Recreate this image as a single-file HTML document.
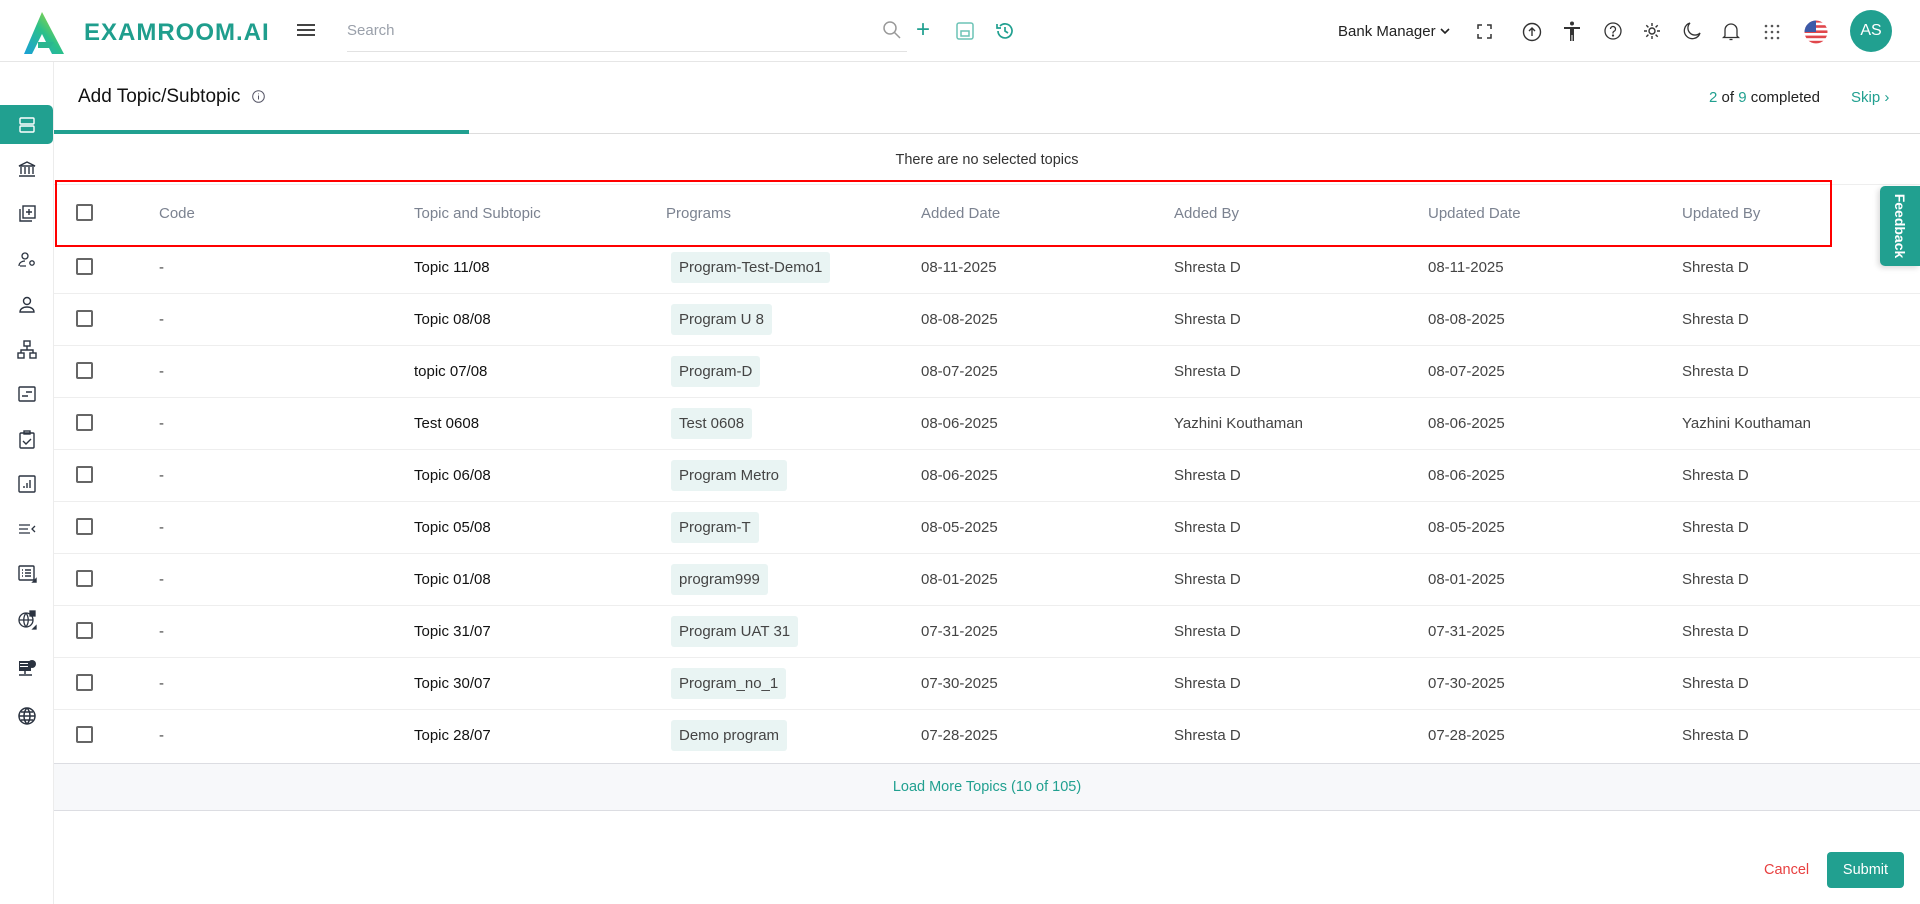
<!DOCTYPE html>
<html><head><meta charset="utf-8"><style>
*{box-sizing:border-box;margin:0;padding:0}
body{width:1920px;height:904px;overflow:hidden;background:#fff;font-family:"Liberation Sans",sans-serif;color:#222;position:relative}
.abs{position:absolute}
.hdr{position:absolute;left:0;top:0;width:1920px;height:62px;border-bottom:1px solid #e6e6e6;background:#fff}
.side{position:absolute;left:0;top:62px;width:54px;height:842px;border-right:1px solid #ececec}
.ic{position:absolute;left:17px;width:20px;height:20px}
.th{position:absolute;font-size:15px;color:#7b8290}
.td{position:absolute;font-size:15px;color:#444}
.cb{position:absolute;left:76px;width:17px;height:17px;border:2px solid #666;border-radius:2px}
.pill{position:absolute;left:671px;height:31px;padding:0 8px;line-height:31px;background:#e9f4f3;border-radius:3px;font-size:15px;color:#444}
.rowline{position:absolute;left:54px;width:1866px;height:1px;background:#eee}
</style></head><body>
<div class="hdr">
 <svg class="abs" style="left:24px;top:12px" width="40" height="42" viewBox="0 0 40 42"><defs><linearGradient id="g" x1="0" y1="1" x2="1" y2="0"><stop offset="0" stop-color="#1aa0d8"/><stop offset=".5" stop-color="#2bc08a"/><stop offset="1" stop-color="#c8e020"/></linearGradient></defs><path d="M18 0 L40 42 H28 L18 22 L8 42 H0 Z" fill="url(#g)"/><path d="M14 30 H30 L26 36 H14Z" fill="#2ab68f"/></svg>
 <div class="abs" style="left:84px;top:19px;font-size:24px;font-weight:bold;color:#1f9e8d;letter-spacing:1px">EXAMROOM.AI</div>
 <div class="abs" style="left:297px;top:24px;width:18px;height:2px;background:#444;box-shadow:0 5px 0 #444,0 10px 0 #444"></div>
 <div class="abs" style="left:347px;top:22px;font-size:15px;color:#9aa0aa">Search</div>
 <div class="abs" style="left:347px;top:51px;width:560px;height:1px;background:#e2e2e2"></div>
 <svg class="abs" style="left:882px;top:20px" width="20" height="20" viewBox="0 0 20 20" fill="none" stroke="#999" stroke-width="1.5"><circle cx="8" cy="8" r="6"/><path d="M12.5 12.5 18 18"/></svg>
 <div class="abs" style="left:916px;top:16px;font-size:24px;color:#21a090">+</div>
 <svg class="abs" style="left:956px;top:22px" width="18" height="18" viewBox="0 0 18 18" fill="none" stroke="#6cc3b6" stroke-width="1.5"><rect x="1" y="1" width="16" height="16" rx="2"/><rect x="5" y="9" width="8" height="5"/></svg>
 <svg class="abs" style="left:995px;top:21px" width="20" height="20" viewBox="0 0 20 20" fill="none" stroke="#21a090" stroke-width="1.7"><path d="M3 10a7 7 0 1 0 2-5"/><path d="M2 3v4h4"/><path d="M10 6v4l3 2"/></svg>
 <div class="abs" style="left:1338px;top:23px;font-size:15px;color:#222">Bank Manager</div>
 <svg class="abs" style="left:1440px;top:27px" width="10" height="8" viewBox="0 0 10 8" fill="none" stroke="#222" stroke-width="1.6"><path d="M1 2l4 4 4-4"/></svg>
 <svg class="abs" style="left:1477px;top:24px" width="15" height="15" viewBox="0 0 15 15" fill="none" stroke="#333" stroke-width="1.5"><path d="M1 5V1h4M10 1h4v4M14 10v4h-4M5 14H1v-4"/></svg>
 <svg class="abs" style="left:1522px;top:22px" width="20" height="20" viewBox="0 0 20 20" fill="none" stroke="#333" stroke-width="1.4"><circle cx="10" cy="10" r="8.5"/><path d="M10 14V6M7 9l3-3 3 3"/></svg>
 <svg class="abs" style="left:1563px;top:21px" width="18" height="20" viewBox="0 0 18 20" fill="#333"><circle cx="9" cy="2.5" r="2"/><path d="M1 6h16v2h-6v12h-1.5v-6h-1v6H7V8H1z"/></svg>
 <svg class="abs" style="left:1604px;top:22px" width="18" height="18" viewBox="0 0 18 18" fill="none" stroke="#333" stroke-width="1.3"><circle cx="9" cy="9" r="8"/><path d="M6.5 7a2.5 2.5 0 1 1 3.5 2.3c-.7.3-1 .8-1 1.5v.7"/><circle cx="9" cy="13.5" r=".5" fill="#333"/></svg>
 <svg class="abs" style="left:1643px;top:22px" width="18" height="18" viewBox="0 0 18 18" fill="none" stroke="#333" stroke-width="1.4"><circle cx="9" cy="9" r="3"/><path d="M9 1v3M9 14v3M1 9h3M14 9h3M3.3 3.3l2.1 2.1M12.6 12.6l2.1 2.1M3.3 14.7l2.1-2.1M12.6 5.4l2.1-2.1"/></svg>
 <svg class="abs" style="left:1683px;top:22px" width="18" height="18" viewBox="0 0 18 18" fill="none" stroke="#333" stroke-width="1.3"><path d="M7 1a8 8 0 1 0 10 10A7 7 0 0 1 7 1z"/></svg>
 <svg class="abs" style="left:1722px;top:21px" width="18" height="20" viewBox="0 0 18 20" fill="none" stroke="#333" stroke-width="1.3"><path d="M3 15V9a6 6 0 0 1 12 0v6l1.5 1.5h-15z"/><path d="M7.5 18.5h3"/></svg>
 <svg class="abs" style="left:1764px;top:24px" width="16" height="16" viewBox="0 0 16 16" fill="#555"><circle cx="2" cy="2" r="1.3"/><circle cx="8" cy="2" r="1.3"/><circle cx="14" cy="2" r="1.3"/><circle cx="2" cy="8" r="1.3"/><circle cx="8" cy="8" r="1.3"/><circle cx="14" cy="8" r="1.3"/><circle cx="2" cy="14" r="1.3"/><circle cx="8" cy="14" r="1.3"/><circle cx="14" cy="14" r="1.3"/></svg>
 <svg class="abs" style="left:1804px;top:20px" width="24" height="24" viewBox="0 0 24 24"><defs><clipPath id="c"><circle cx="12" cy="12" r="11.5"/></clipPath></defs><g clip-path="url(#c)"><rect width="24" height="24" fill="#fff"/><g fill="#e0474c"><rect y="0" width="24" height="2.6"/><rect y="5.2" width="24" height="2.6"/><rect y="10.4" width="24" height="2.6"/><rect y="15.6" width="24" height="2.6"/><rect y="20.8" width="24" height="2.6"/></g><rect width="12" height="12" fill="#3d5aa8"/></g></svg>
 <div class="abs" style="left:1850px;top:10px;width:42px;height:42px;border-radius:50%;background:#21a090;color:#fff;font-size:16px;line-height:42px;text-align:center">AS</div>
</div>

<div class="side">
 <div class="abs" style="left:0;top:43px;width:53px;height:39px;background:#21a090;border-radius:0 5px 5px 0"></div>
 <svg class="ic" style="top:53px" viewBox="0 0 20 20" fill="none" stroke="#fff" stroke-width="1.4"><rect x="3" y="3" width="14" height="6" rx="1"/><rect x="3" y="11" width="14" height="6" rx="1"/></svg>
 <svg class="ic" style="top:97px" viewBox="0 0 20 20" fill="none" stroke="#2b3340" stroke-width="1.4"><path d="M2 7l8-4 8 4zM4 8v7M8 8v7M12 8v7M16 8v7M2 17h16"/></svg>
 <svg class="ic" style="top:142px" viewBox="0 0 20 20" fill="none" stroke="#2b3340" stroke-width="1.4"><rect x="6" y="2" width="12" height="12"/><path d="M3 5v12h12M12 5v6M9 8h6"/></svg>
 <svg class="ic" style="top:188px" viewBox="0 0 20 20" fill="none" stroke="#2b3340" stroke-width="1.3"><circle cx="8" cy="6" r="3"/><path d="M2 16c0-4 4-5 6-5M3 16h6"/><circle cx="15" cy="13" r="2.2"/></svg>
 <svg class="ic" style="top:233px" viewBox="0 0 20 20" fill="none" stroke="#2b3340" stroke-width="1.4"><circle cx="10" cy="6" r="3.5"/><path d="M3 17c0-3 3-5 7-5s7 2 7 5z"/></svg>
 <svg class="ic" style="top:278px" viewBox="0 0 20 20" fill="none" stroke="#2b3340" stroke-width="1.4"><rect x="7" y="1" width="6" height="5"/><rect x="1" y="13" width="6" height="5"/><rect x="13" y="13" width="6" height="5"/><path d="M10 6v4M4 13v-3h12v3"/></svg>
 <svg class="ic" style="top:322px" viewBox="0 0 20 20" fill="none" stroke="#2b3340" stroke-width="1.4"><rect x="2" y="3" width="16" height="14" rx="1"/><path d="M9 8h6M5 12h6"/></svg>
 <svg class="ic" style="top:368px" viewBox="0 0 20 20" fill="none" stroke="#2b3340" stroke-width="1.4"><rect x="3" y="3" width="14" height="15" rx="1"/><rect x="7" y="1" width="6" height="3"/><path d="M6 11l3 3 5-5"/></svg>
 <svg class="ic" style="top:412px" viewBox="0 0 20 20" fill="none" stroke="#2b3340" stroke-width="1.4"><rect x="2" y="2" width="16" height="16" rx="1"/><path d="M7 14v-2M10 14V9M13 14V6"/></svg>
 <svg class="ic" style="top:457px" viewBox="0 0 20 20" fill="none" stroke="#2b3340" stroke-width="1.3"><path d="M2 6h11M2 10h9M2 14h11M18 7l-3 3 3 3"/></svg>
 <svg class="ic" style="top:502px" viewBox="0 0 20 20" fill="none" stroke="#2b3340" stroke-width="1.4"><rect x="2" y="2" width="15" height="14" rx="1"/><path d="M5 6h1M8 6h6M5 9h1M8 9h6M5 12h1M8 12h6"/><path d="M19 18h-3l3-3z" fill="#2b3340"/></svg>
 <svg class="ic" style="top:548px" viewBox="0 0 20 20" fill="none" stroke="#2b3340" stroke-width="1.3"><circle cx="9" cy="10" r="7"/><path d="M2 10h14M9 3c-3 4-3 10 0 14M9 3c3 4 3 10 0 14"/><rect x="13" y="1" width="5" height="5" fill="#2b3340"/><path d="M19 19h-3l3-3z" fill="#2b3340"/></svg>
 <svg class="ic" style="top:597px" viewBox="0 0 20 20" fill="#2b3340"><rect x="2" y="2" width="12" height="10"/><circle cx="15" cy="5" r="4"/><rect x="3" y="4" width="8" height="1" fill="#fff"/><rect x="3" y="7" width="8" height="1" fill="#fff"/><path d="M8 12v3M2 16h13" stroke="#2b3340" stroke-width="1.5"/></svg>
 <svg class="ic" style="top:644px" viewBox="0 0 20 20" fill="none" stroke="#2b3340" stroke-width="1.5"><circle cx="10" cy="10" r="8"/><path d="M2 10h16M10 2c-4 4-4 12 0 16M10 2c4 4 4 12 0 16M4 6h12M4 14h12"/></svg>
</div>

<div class="abs" style="left:78px;top:86px;font-size:19px;color:#111">Add Topic/Subtopic</div>
<svg class="abs" style="left:252px;top:90px" width="13" height="13" viewBox="0 0 13 13" fill="none" stroke="#556" stroke-width="1"><circle cx="6.5" cy="6.5" r="5.8"/><path d="M6.5 5.5v4M6.5 3.5v.8"/></svg>
<div class="abs" style="left:1709px;top:89px;font-size:15px;color:#222"><span style="color:#21a090">2</span> of <span style="color:#21a090">9</span> completed</div>
<div class="abs" style="left:1851px;top:89px;font-size:15px;color:#21a090">Skip ›</div>
<div class="abs" style="left:54px;top:133px;width:1866px;height:1px;background:#ddd"></div>
<div class="abs" style="left:54px;top:130px;width:415px;height:4px;background:#21a090"></div>

<div class="abs" style="left:0;width:1920px;top:152px;text-align:center;padding-left:54px;font-size:14.5px;color:#333">There are no selected topics</div>
<div class="rowline" style="top:184px"></div>
<div class="abs" style="left:55px;top:180px;width:1777px;height:67px;border:2px solid #f00"></div>
<div class="cb" style="top:204px"></div>
<div class="th" style="left:159px;top:205px">Code</div>
<div class="th" style="left:414px;top:205px">Topic and Subtopic</div>
<div class="th" style="left:666px;top:205px">Programs</div>
<div class="th" style="left:921px;top:205px">Added Date</div>
<div class="th" style="left:1174px;top:205px">Added By</div>
<div class="th" style="left:1428px;top:205px">Updated Date</div>
<div class="th" style="left:1682px;top:205px">Updated By</div>
<div class="abs" style="left:1880px;top:186px;width:40px;height:80px;background:#21a090;border-radius:5px 0 0 5px;box-shadow:-2px 2px 6px rgba(0,0,0,.15)"><div style="position:absolute;left:50%;top:50%;transform:translate(-50%,-50%) rotate(90deg);color:#fff;font-weight:bold;font-size:14px">Feedback</div></div>

<div id="rows"></div>
<div class="abs" style="left:54px;top:763px;width:1866px;height:48px;background:#f7f8fa;border-top:1px solid #dcdde2;border-bottom:1px solid #dcdde2"></div>
<div class="abs" style="left:54px;width:1866px;top:779px;text-align:center;font-size:14.5px;color:#21a090">Load More Topics (10 of 105)</div>
<div class="abs" style="left:1764px;top:862px;font-size:14.5px;color:#e84040">Cancel</div>
<div class="abs" style="left:1827px;top:852px;width:77px;height:36px;background:#21a090;border-radius:4px;color:#fff;font-size:14.5px;line-height:36px;text-align:center">Submit</div>

<script>
var d=[["Topic 11/08","Program-Test-Demo1","08-11-2025","Shresta D"],["Topic 08/08","Program U 8","08-08-2025","Shresta D"],["topic 07/08","Program-D","08-07-2025","Shresta D"],["Test 0608","Test 0608","08-06-2025","Yazhini Kouthaman"],["Topic 06/08","Program Metro","08-06-2025","Shresta D"],["Topic 05/08","Program-T","08-05-2025","Shresta D"],["Topic 01/08","program999","08-01-2025","Shresta D"],["Topic 31/07","Program UAT 31","07-31-2025","Shresta D"],["Topic 30/07","Program_no_1","07-30-2025","Shresta D"],["Topic 28/07","Demo program","07-28-2025","Shresta D"]];
var h="";
d.forEach(function(r,i){var c=267+i*52;
h+='<div class="cb" style="top:'+(c-9)+'px"></div><div class="td" style="left:159px;top:'+(c-8)+'px">-</div><div class="td" style="left:414px;top:'+(c-8)+'px;color:#111">'+r[0]+'</div><div class="pill" style="top:'+(c-15)+'px">'+r[1]+'</div><div class="td" style="left:921px;top:'+(c-8)+'px">'+r[2]+'</div><div class="td" style="left:1174px;top:'+(c-8)+'px">'+r[3]+'</div><div class="td" style="left:1428px;top:'+(c-8)+'px">'+r[2]+'</div><div class="td" style="left:1682px;top:'+(c-8)+'px">'+r[3]+'</div>';
if(i<9)h+='<div class="rowline" style="top:'+(c+26)+'px"></div>';});
document.getElementById("rows").innerHTML=h;
</script>
</body></html>
